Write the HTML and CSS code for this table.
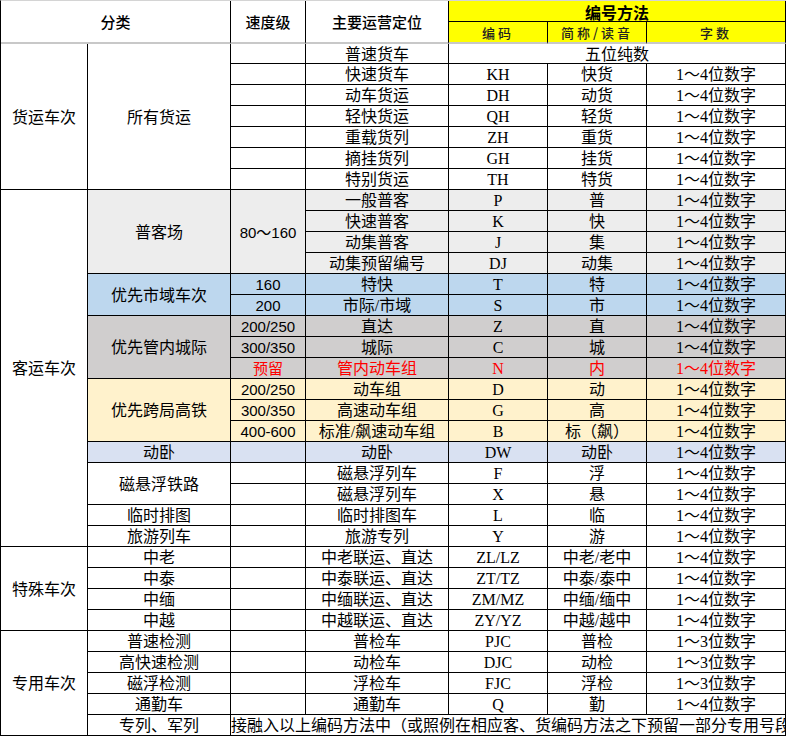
FILE: index.html
```html
<!DOCTYPE html>
<html lang="zh-CN">
<head>
<meta charset="utf-8">
<title>车次编号方法</title>
<link rel="stylesheet" href="styles.css">
</head>
<body>
<div class="sheet">
  <div class="c hd k2 r2">分类</div>
  <div class="c hd r2">速度级</div>
  <div class="c hd r2">主要运营定位</div>
  <div class="c yt k3">编号方法</div>
  <div class="c ys">编码</div>
  <div class="c ys">简称/读音</div>
  <div class="c ys">字数</div>

  <div class="c cat r7">货运车次</div>
  <div class="c cat r7">所有货运</div>
  <div class="c"></div><div class="c">普速货车</div><div class="c k3">五位纯数</div>
  <div class="c"></div><div class="c">快速货车</div><div class="c">KH</div><div class="c">快货</div><div class="c">1～4位数字</div>
  <div class="c"></div><div class="c">动车货运</div><div class="c">DH</div><div class="c">动货</div><div class="c">1～4位数字</div>
  <div class="c"></div><div class="c">轻快货运</div><div class="c">QH</div><div class="c">轻货</div><div class="c">1～4位数字</div>
  <div class="c"></div><div class="c">重载货列</div><div class="c">ZH</div><div class="c">重货</div><div class="c">1～4位数字</div>
  <div class="c"></div><div class="c">摘挂货列</div><div class="c">GH</div><div class="c">挂货</div><div class="c">1～4位数字</div>
  <div class="c"></div><div class="c">特别货运</div><div class="c">TH</div><div class="c">特货</div><div class="c">1～4位数字</div>

  <div class="c cat r17">客运车次</div>
  <div class="c cat r4 g1">普客场</div>
  <div class="c sp r4 g1">80～160</div>
  <div class="c g1">一般普客</div><div class="c g1">P</div><div class="c g1">普</div><div class="c g1">1～4位数字</div>
  <div class="c g1">快速普客</div><div class="c g1">K</div><div class="c g1">快</div><div class="c g1">1～4位数字</div>
  <div class="c g1">动集普客</div><div class="c g1">J</div><div class="c g1">集</div><div class="c g1">1～4位数字</div>
  <div class="c g1">动集预留编号</div><div class="c g1">DJ</div><div class="c g1">动集</div><div class="c g1">1～4位数字</div>

  <div class="c cat r2 bl">优先市域车次</div>
  <div class="c sp bl">160</div><div class="c bl">特快</div><div class="c bl">T</div><div class="c bl">特</div><div class="c bl">1～4位数字</div>
  <div class="c sp bl">200</div><div class="c bl">市际/市域</div><div class="c bl">S</div><div class="c bl">市</div><div class="c bl">1～4位数字</div>

  <div class="c cat r3 g2">优先管内城际</div>
  <div class="c sp g2">200/250</div><div class="c g2">直达</div><div class="c g2">Z</div><div class="c g2">直</div><div class="c g2">1～4位数字</div>
  <div class="c sp g2">300/350</div><div class="c g2">城际</div><div class="c g2">C</div><div class="c g2">城</div><div class="c g2">1～4位数字</div>
  <div class="c sp g2 red">预留</div><div class="c g2 red">管内动车组</div><div class="c g2 red">N</div><div class="c g2 red">内</div><div class="c g2 red">1～4位数字</div>

  <div class="c cat r3 cr">优先跨局高铁</div>
  <div class="c sp cr">200/250</div><div class="c cr">动车组</div><div class="c cr">D</div><div class="c cr">动</div><div class="c cr">1～4位数字</div>
  <div class="c sp cr">300/350</div><div class="c cr">高速动车组</div><div class="c cr">G</div><div class="c cr">高</div><div class="c cr">1～4位数字</div>
  <div class="c sp cr">400-600</div><div class="c cr">标准/飙速动车组</div><div class="c cr">B</div><div class="c cr">标（飙）</div><div class="c cr">1～4位数字</div>

  <div class="c cat lv">动卧</div><div class="c lv"></div><div class="c lv">动卧</div><div class="c lv">DW</div><div class="c lv">动卧</div><div class="c lv">1～4位数字</div>

  <div class="c cat r2">磁悬浮铁路</div>
  <div class="c"></div><div class="c">磁悬浮列车</div><div class="c">F</div><div class="c">浮</div><div class="c">1～4位数字</div>
  <div class="c"></div><div class="c">磁悬浮列车</div><div class="c">X</div><div class="c">悬</div><div class="c">1～4位数字</div>
  <div class="c cat">临时排图</div><div class="c"></div><div class="c">临时排图车</div><div class="c">L</div><div class="c">临</div><div class="c">1～4位数字</div>
  <div class="c cat">旅游列车</div><div class="c"></div><div class="c">旅游专列</div><div class="c">Y</div><div class="c">游</div><div class="c">1～4位数字</div>

  <div class="c cat r4">特殊车次</div>
  <div class="c cat">中老</div><div class="c"></div><div class="c">中老联运、直达</div><div class="c">ZL/LZ</div><div class="c">中老/老中</div><div class="c">1～4位数字</div>
  <div class="c cat">中泰</div><div class="c"></div><div class="c">中泰联运、直达</div><div class="c">ZT/TZ</div><div class="c">中泰/泰中</div><div class="c">1～4位数字</div>
  <div class="c cat">中缅</div><div class="c"></div><div class="c">中缅联运、直达</div><div class="c">ZM/MZ</div><div class="c">中缅/缅中</div><div class="c">1～4位数字</div>
  <div class="c cat">中越</div><div class="c"></div><div class="c">中越联运、直达</div><div class="c">ZY/YZ</div><div class="c">中越/越中</div><div class="c">1～4位数字</div>

  <div class="c cat r5">专用车次</div>
  <div class="c cat">普速检测</div><div class="c"></div><div class="c">普检车</div><div class="c">PJC</div><div class="c">普检</div><div class="c">1～3位数字</div>
  <div class="c cat">高快速检测</div><div class="c"></div><div class="c">动检车</div><div class="c">DJC</div><div class="c">动检</div><div class="c">1～3位数字</div>
  <div class="c cat">磁浮检测</div><div class="c"></div><div class="c">浮检车</div><div class="c">FJC</div><div class="c">浮检</div><div class="c">1～3位数字</div>
  <div class="c cat">通勤车</div><div class="c"></div><div class="c">通勤车</div><div class="c">Q</div><div class="c">勤</div><div class="c">1～4位数字</div>
  <div class="c cat">专列、军列</div>
  <div class="c k5 left">接融入以上编码方法中（或照例在相应客、货编码方法之下预留一部分专用号段</div>
</div>
</body>
</html>
```

FILE: styles.css
```css
html, body {
  margin: 0;
  padding: 0;
  background: #ffffff;
}

.sheet {
  display: grid;
  grid-template-columns: 87px 143px 75px 143px 99px 99px 139px;
  grid-template-rows: 21px 22px 20px repeat(32, 21px);
  width: max-content;
  border-left: 1px solid #000;
  border-top: 1px solid #d4d4d4;
  color: #000;
}

.c {
  box-sizing: border-box;
  border-right: 1px solid #000;
  border-bottom: 1px solid #000;
  display: flex;
  align-items: center;
  justify-content: center;
  overflow: hidden;
  white-space: nowrap;
  font-family: "Liberation Serif", "Noto Sans CJK SC", sans-serif;
  font-size: 16px;
  line-height: 18px;
  padding-top: 2px;
}

.cat,
.sp {
  font-family: "Liberation Sans", "Noto Sans CJK SC", sans-serif;
}

.sp {
  font-size: 15px;
}

.hd {
  font-family: "Noto Sans CJK SC", sans-serif;
  font-size: 15px;
  font-weight: 500;
  border-bottom: 2px solid #c8c8c8;
  padding-top: 0;
}

.yt {
  background: #ffff00;
  font-family: "Noto Sans CJK SC", sans-serif;
  font-weight: 600;
  font-size: 16px;
  line-height: 16px;
  padding-top: 1px;
  overflow: visible;
}

.ys {
  background: #ffff00;
  font-family: "Noto Sans CJK SC", sans-serif;
  font-size: 13px;
  font-weight: 500;
  letter-spacing: 3px;
  color: #222;
  border-bottom: 2px solid #c8c8c8;
}

.k2 { grid-column: span 2; }
.k3 { grid-column: span 3; }
.k5 { grid-column: span 5; }
.r2 { grid-row: span 2; }
.r3 { grid-row: span 3; }
.r4 { grid-row: span 4; }
.r5 { grid-row: span 5; }
.r7 { grid-row: span 7; }
.r17 { grid-row: span 17; }

.left {
  justify-content: flex-start;
}

.g1 { background: #ededed; }
.bl { background: #bdd7ee; }
.g2 { background: #d0cece; }
.cr { background: #fff2cc; }
.lv { background: #d9e1f2; }

.red { color: #ff0000; }
```
